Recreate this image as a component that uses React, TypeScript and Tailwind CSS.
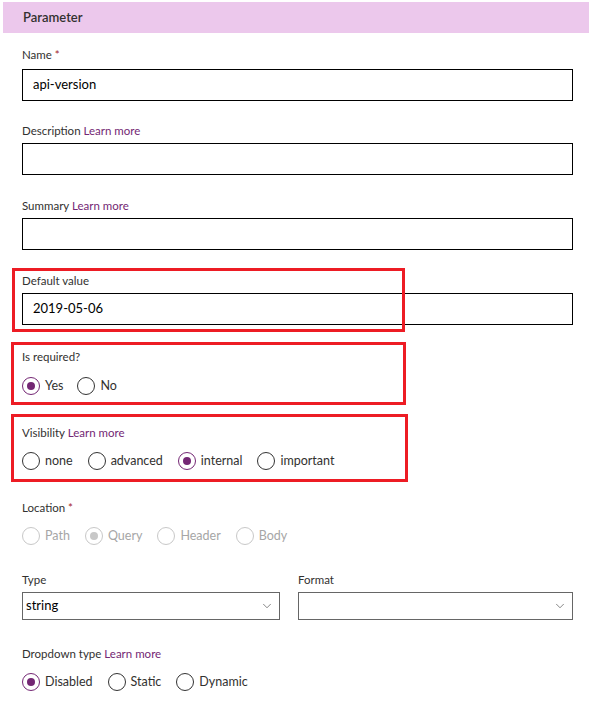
import { ChevronDown } from "lucide-react";

const font = { fontFamily: 'Lato, "Noto Sans", sans-serif' };

type RadioProps = {
  label: string;
  checked?: boolean;
  disabled?: boolean;
};

const Radio = ({ label, checked, disabled }: RadioProps) => {
  const ring = disabled
    ? "border-[#c8c8c8]"
    : checked
    ? "border-[#742774]"
    : "border-[#333333]";
  const dot = disabled ? "bg-[#c8c8c8]" : "bg-[#742774]";
  return (
    <label className="flex items-center gap-[5px] h-5">
      <span
        className={`w-[18px] h-[18px] rounded-full border ${ring} flex items-center justify-center bg-white`}
      >
        {checked && <span className={`w-[8px] h-[8px] rounded-full ${dot}`} />}
      </span>
      <span
        className={`text-[12.5px] leading-5 ${
          disabled ? "text-[#a6a6a6]" : "text-[#323130]"
        }`}
      >
        {label}
      </span>
    </label>
  );
};

const Label = ({ text, learn, required }: { text: string; learn?: boolean; required?: boolean }) => (
  <div className="text-[11.5px] leading-4 text-[#323130] pt-px">
    {text}
    {required && <span className="text-[#a4262c]"> *</span>}
    {learn && <span className="text-[#742774]"> Learn more</span>}
  </div>
);

const TextInput = ({ value }: { value?: string }) => (
  <div className="h-[32px] border border-black flex items-center pl-[10px] text-[13px] text-black">
    {value}
  </div>
);

const Select = ({ value }: { value?: string }) => (
  <div className="h-[28px] border border-[#666666] flex items-center justify-between pl-[3px] pr-[5px] text-[13px] text-black">
    <span>{value}</span>
    <ChevronDown className="w-[14px] h-[14px] text-[#444]" strokeWidth={1.1} />
  </div>
);

export default function App() {
  return (
    <div className="relative w-[592px] h-[708px] bg-white overflow-hidden" style={font}>
      {/* Header */}
      <div className="mt-[2px] mx-[3px] h-[31px] bg-[#ecc8ec] flex items-center pl-[20px]">
        <span className="text-[13px] font-semibold text-[#323130]">Parameter</span>
      </div>

      <div className="pl-[22px] pr-[19px]">
        <div className="mt-[13px]">
          <Label text="Name" required />
          <div className="mt-[6px]">
            <TextInput value="api-version" />
          </div>
        </div>

        <div className="mt-[21px]">
          <Label text="Description" learn />
          <div className="mt-[4px]">
            <TextInput />
          </div>
        </div>

        <div className="mt-[22px]">
          <Label text="Summary" learn />
          <div className="mt-[4px]">
            <TextInput />
          </div>
        </div>

        <div className="mt-[22px]">
          <Label text="Default value" />
          <div className="mt-[4px]">
            <TextInput value="2019-05-06" />
          </div>
        </div>

        <div className="mt-[23px]">
          <Label text="Is required?" />
          <div className="mt-[11px] flex gap-[14px]">
            <Radio label="Yes" checked />
            <Radio label="No" />
          </div>
        </div>

        <div className="mt-[28px]">
          <Label text="Visibility" learn />
          <div className="mt-[10px] flex gap-[15px]">
            <Radio label="none" />
            <Radio label="advanced" />
            <Radio label="internal" checked />
            <Radio label="important" />
          </div>
        </div>

        <div className="mt-[28px]">
          <Label text="Location" required />
          <div className="mt-[10px] flex gap-[15px]">
            <Radio label="Path" disabled />
            <Radio label="Query" checked disabled />
            <Radio label="Header" disabled />
            <Radio label="Body" disabled />
          </div>
        </div>

        <div className="mt-[25px] flex gap-[18px]">
          <div className="w-[258px]">
            <Label text="Type" />
            <div className="mt-[4px]">
              <Select value="string" />
            </div>
          </div>
          <div className="flex-1">
            <Label text="Format" />
            <div className="mt-[4px]">
              <Select />
            </div>
          </div>
        </div>

        <div className="mt-[25px]">
          <Label text="Dropdown type" learn />
          <div className="mt-[10px] flex gap-[15px]">
            <Radio label="Disabled" checked />
            <Radio label="Static" />
            <Radio label="Dynamic" />
          </div>
        </div>
      </div>

      {/* Annotation highlights */}
      <div className="absolute left-[12px] top-[268px] w-[393px] h-[64px] border-[3px] border-[#ed1c24]" />
      <div className="absolute left-[11px] top-[342px] w-[395px] h-[63px] border-[3px] border-[#ed1c24]" />
      <div className="absolute left-[11px] top-[414px] w-[397px] h-[68px] border-[3px] border-[#ed1c24]" />
    </div>
  );
}
